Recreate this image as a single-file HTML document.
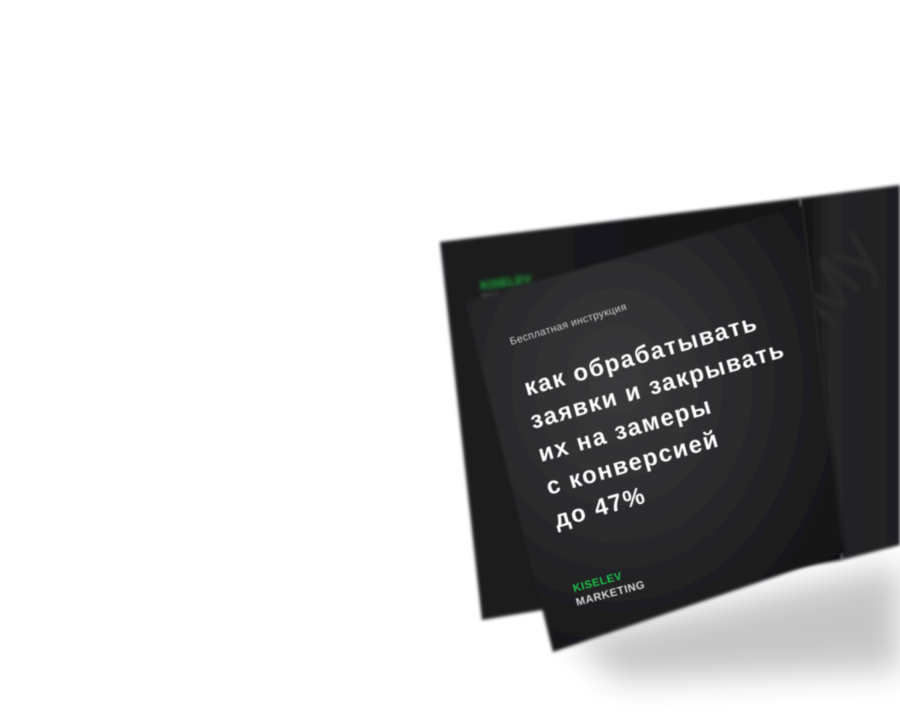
<!DOCTYPE html>
<html><head><meta charset="utf-8"><style>
html,body{margin:0;padding:0;background:#fff;width:900px;height:725px;overflow:hidden}
svg{display:block}
text{font-family:"Liberation Sans","DejaVu Sans",sans-serif}
</style></head><body>
<svg width="900" height="725" viewBox="0 0 900 725" xmlns="http://www.w3.org/2000/svg">
<defs>
<filter id="b1" x="-20%" y="-20%" width="140%" height="140%"><feGaussianBlur stdDeviation="1.5"/></filter>
<filter id="b2" x="-30%" y="-30%" width="160%" height="160%"><feGaussianBlur stdDeviation="16"/></filter>
<filter id="b3"><feGaussianBlur stdDeviation="0.5"/></filter>
<filter id="b4"><feGaussianBlur stdDeviation="2"/></filter>
<radialGradient id="front" cx="0.4" cy="0.4" r="0.7">
<stop offset="0" stop-color="#3a3a3c"/><stop offset="0.5" stop-color="#29292b"/><stop offset="1" stop-color="#111112"/>
</radialGradient>
<linearGradient id="right" x1="0" y1="0" x2="1" y2="0">
<stop offset="0" stop-color="#0f0f10"/><stop offset="0.3" stop-color="#262628"/><stop offset="1" stop-color="#1e1e20"/>
</linearGradient>
<linearGradient id="left" x1="0" y1="0" x2="1" y2="0">
<stop offset="0" stop-color="#1e1e20"/><stop offset="1" stop-color="#111112"/>
</linearGradient>
</defs>
<polygon points="570,640 850,575 900,565 900,670 620,680" fill="#000" opacity="0.22" filter="url(#b2)"/>
<polygon points="800,198 900,185 900,545 842,560" fill="url(#right)" filter="url(#b1)"/>
<text transform="translate(835,330) rotate(-60)" font-size="70" fill="#2a2a2c" font-style="italic" font-family="Liberation Serif" filter="url(#b4)">My</text>
<polygon points="440,242 800,198 842,560 482,620" fill="url(#left)" filter="url(#b1)"/>
<text transform="translate(481,290) rotate(-8)" font-size="12" font-weight="bold" fill="#1fae3f" filter="url(#b4)">KISELEV</text>
<text transform="translate(483,303) rotate(-8)" font-size="12" font-weight="bold" fill="#777" filter="url(#b4)">MA</text>
<polygon points="465,302 803,205 845,553 553,652" fill="url(#front)" filter="url(#b1)"/>
<g filter="url(#b3)">
<text transform="translate(511,345) rotate(-17)" font-size="10.5" fill="#cfcfcf" letter-spacing="0.3">Бесплатная инструкция</text>
<g font-size="24" font-weight="bold" fill="#fff" letter-spacing="1.6">
<text transform="translate(527,396) rotate(-16)">как обрабатывать</text>
<text transform="translate(533,429) rotate(-16)">заявки и закрывать</text>
<text transform="translate(541,462) rotate(-16)">их на замеры</text>
<text transform="translate(549,495) rotate(-16)">с конверсией</text>
<text transform="translate(557,528) rotate(-16)">до 47%</text>
</g>
<text transform="translate(574,592) rotate(-15)" font-size="11" font-weight="bold" fill="#1fc24a" letter-spacing="0.5">KISELEV</text>
<text transform="translate(577,606) rotate(-15)" font-size="11" font-weight="bold" fill="#d8d8d8" letter-spacing="0.5">MARKETING</text>
</g>
</svg>
</body></html>
